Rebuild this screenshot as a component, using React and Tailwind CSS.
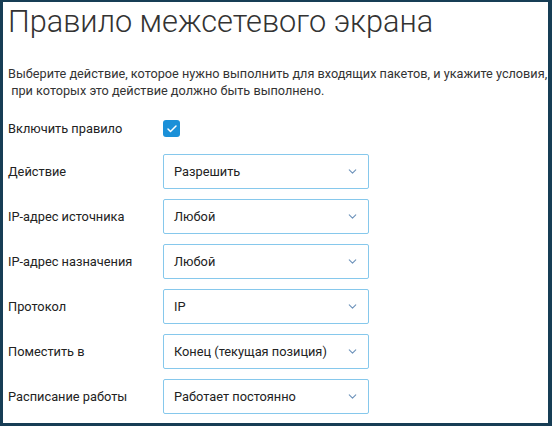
import { ChevronDown, Check } from 'lucide-react'

const rows = [
  { label: 'Действие', value: 'Разрешить' },
  { label: 'IP-адрес источника', value: 'Любой' },
  { label: 'IP-адрес назначения', value: 'Любой' },
  { label: 'Протокол', value: 'IP' },
  { label: 'Поместить в', value: 'Конец (текущая позиция)' },
  { label: 'Расписание работы', value: 'Работает постоянно' },
]

const Select = ({ value }) => (
  <div className="flex h-[35px] w-[206px] items-center justify-between rounded-[2px] border border-[#86c8ec] bg-white pl-[10px] pr-[9px]">
    <span className="text-[12.8px] text-[#222]">{value}</span>
    <ChevronDown size={13} strokeWidth={2} className="text-[#6e93bb]" />
  </div>
)

export default function App() {
  return (
    <div
      className="h-[426px] w-[552px] overflow-hidden border-t-[2px] border-r-[4px] border-b-[3px] border-l-[3px] border-[#173d55] bg-white pl-[5px] text-[#333]"
      style={{ fontFamily: 'Roboto, "Liberation Sans", sans-serif' }}
    >
      <h1 className="mt-[1px] text-[30.7px] font-light leading-[38px] text-[#333]">
        Правило межсетевого экрана
      </h1>
      <p className="mt-[24px] text-[12.7px] leading-[17px] text-[#333]">
        Выберите действие, которое нужно выполнить для входящих пакетов, и укажите условия,
        <br />
        &nbsp;при которых это действие должно быть выполнено.
      </p>
      <div className="mt-[20px] flex h-[19px] items-center">
        <span className="w-[155px] text-[12.8px] text-[#222]">Включить правило</span>
        <span className="flex h-[17px] w-[17px] items-center justify-center rounded-[3px] bg-[#1b90d8]">
          <Check size={12} strokeWidth={3} className="text-white" />
        </span>
      </div>
      <div className="mt-[16px] flex flex-col gap-[10px]">
        {rows.map((r) => (
          <div key={r.label} className="flex items-center">
            <span className="w-[155px] text-[12.8px] text-[#222]">{r.label}</span>
            <Select value={r.value} />
          </div>
        ))}
      </div>
    </div>
  )
}
